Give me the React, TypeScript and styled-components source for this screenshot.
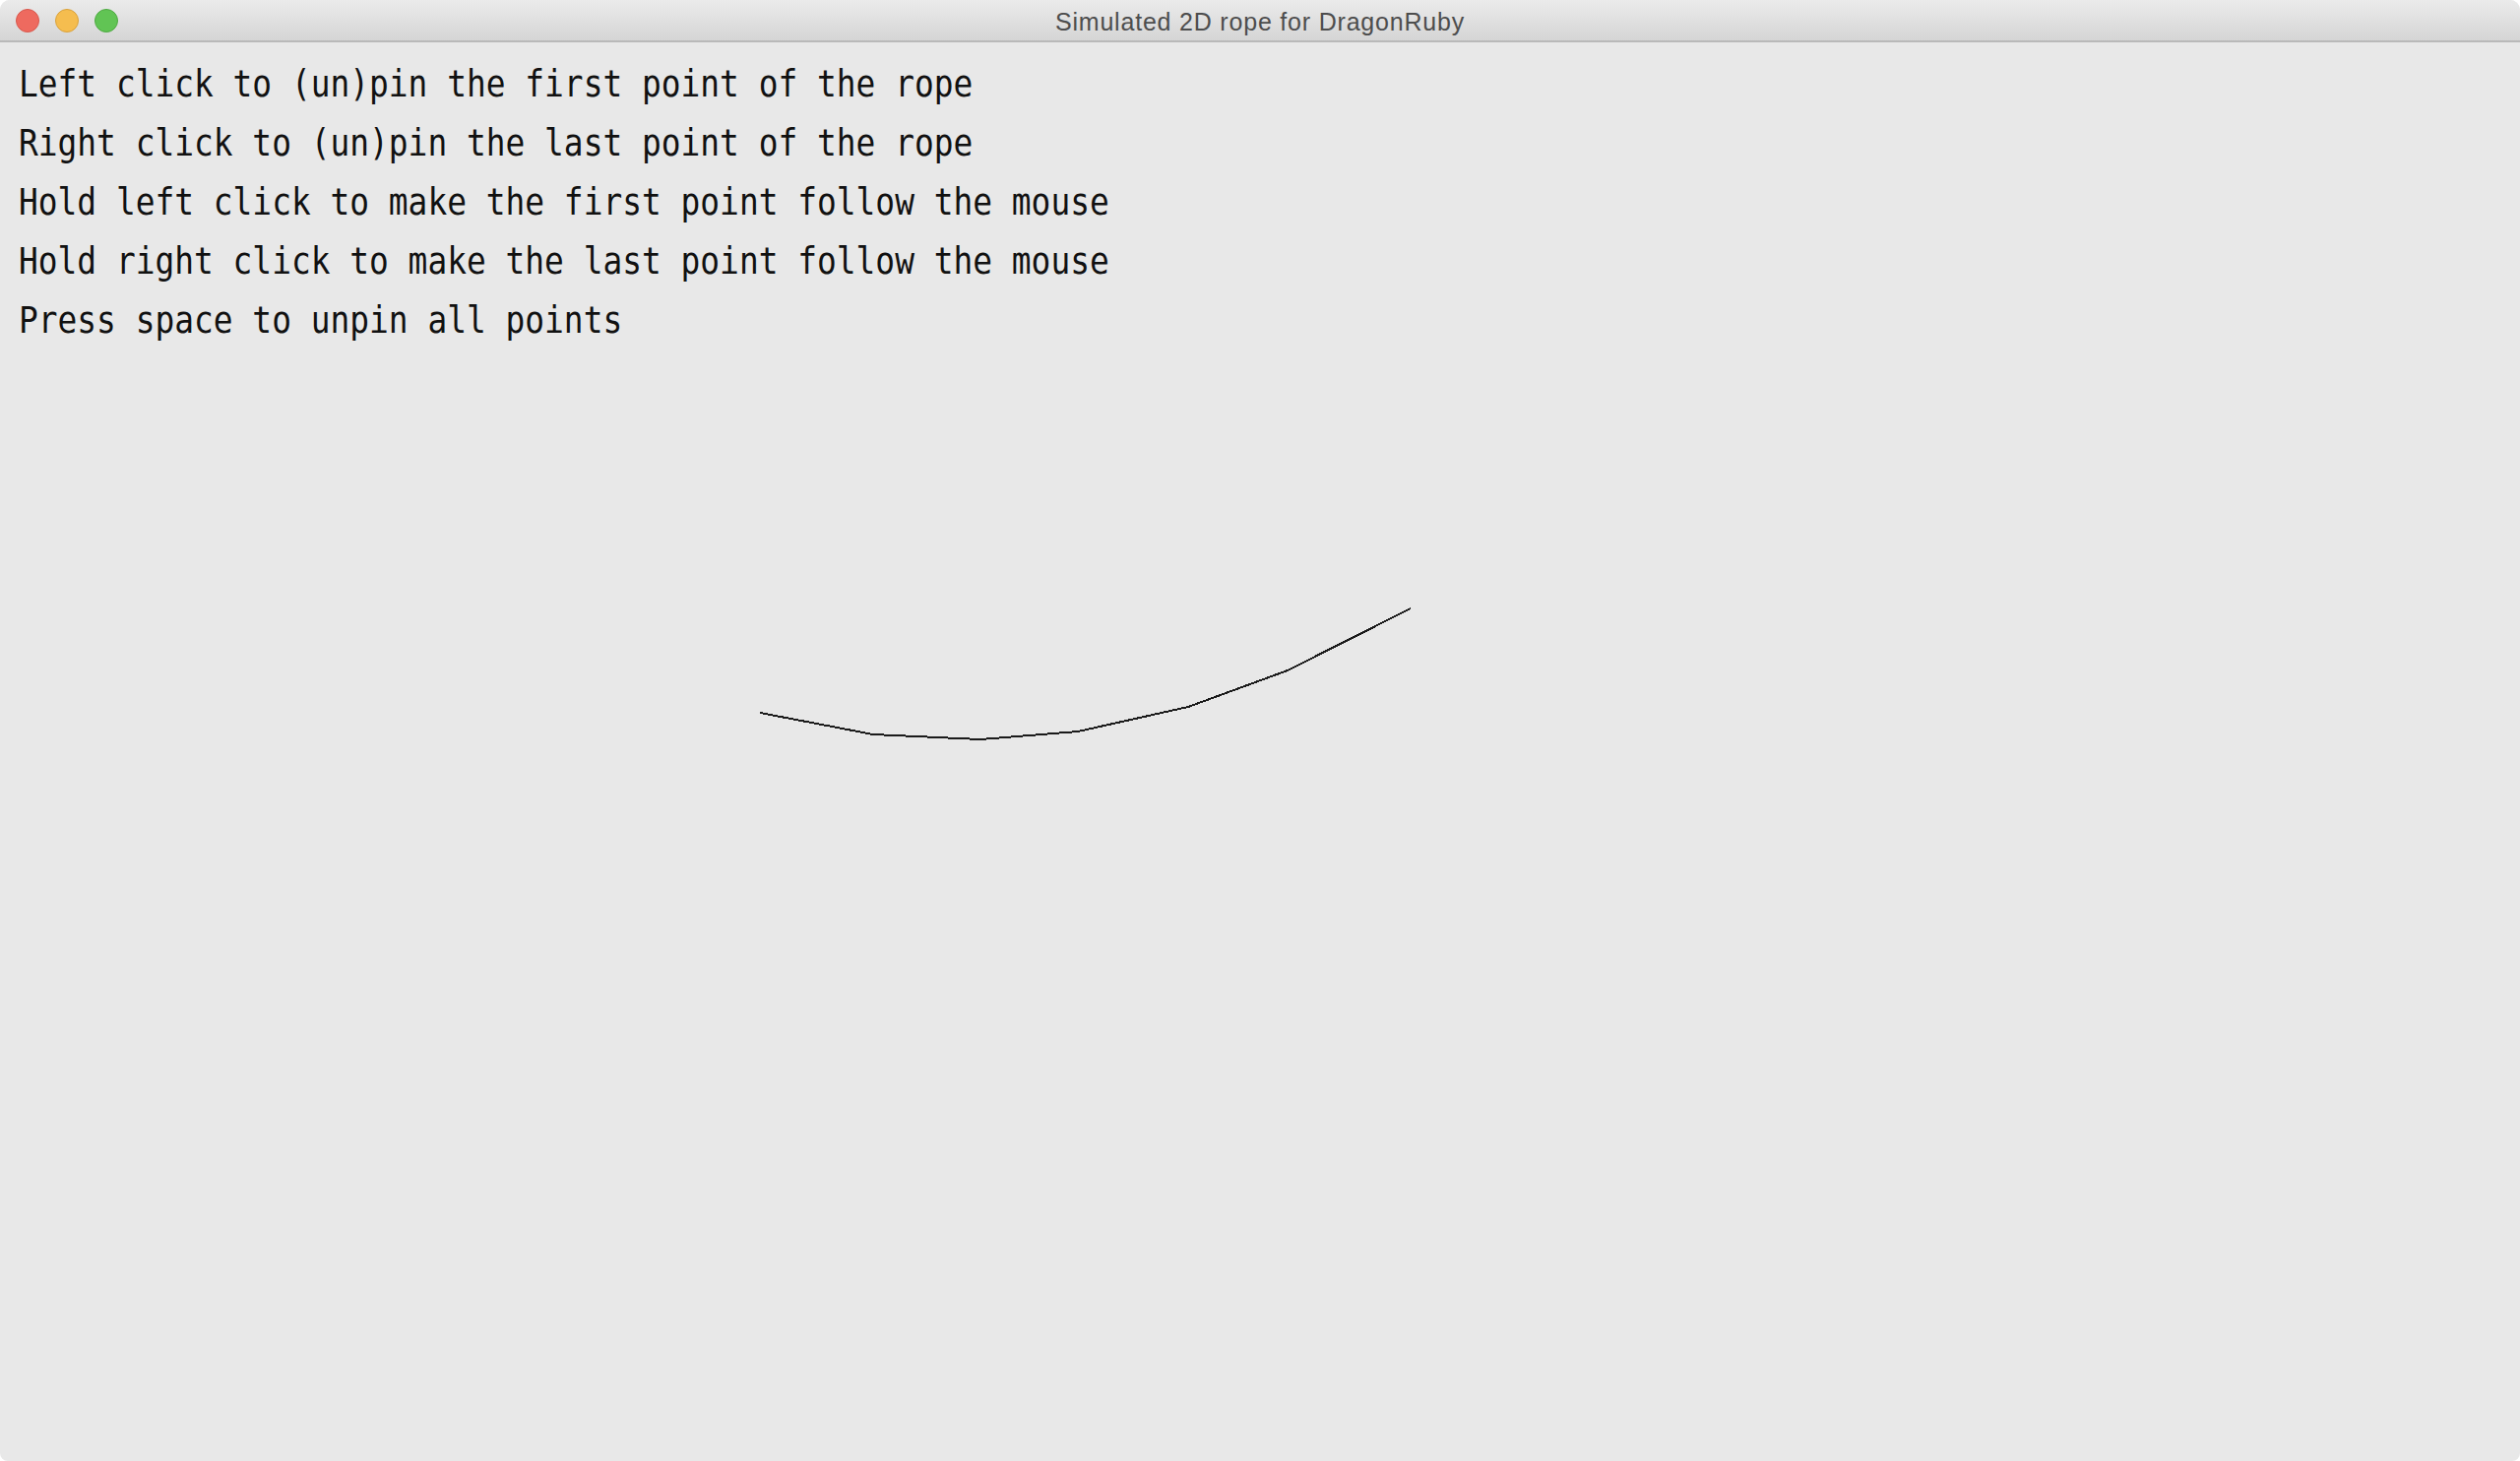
import React from "react";
import styled, { createGlobalStyle } from "styled-components";

const GlobalStyle = createGlobalStyle`
  html, body {
    margin: 0;
    padding: 0;
    background: #ffffff;
  }
  #root {
    width: 2560px;
    height: 1484px;
  }
`;

const Window = styled.div`
  width: 2560px;
  height: 1484px;
  display: flex;
  flex-direction: column;
  border-radius: 10px 10px 8px 8px;
  overflow: hidden;
  background: #e8e8e8;
`;

const TitleBar = styled.div`
  height: 41px;
  flex-shrink: 0;
  display: grid;
  grid-template-columns: 1fr auto 1fr;
  align-items: center;
  padding: 0 16px;
  background: linear-gradient(#ebebeb, #d5d5d5);
  border-bottom: 2px solid #b9b9b9;
  box-sizing: content-box;
`;

const Lights = styled.div`
  display: flex;
  gap: 16px;
  align-items: center;
`;

const Light = styled.span<{ $fill: string; $edge: string }>`
  width: 22px;
  height: 22px;
  border-radius: 50%;
  background: ${({ $fill }) => $fill};
  border: 1px solid ${({ $edge }) => $edge};
`;

const Title = styled.div`
  font-family: "Liberation Sans", Arial, sans-serif;
  font-size: 25px;
  letter-spacing: 0.8px;
  color: #4d4d4d;
  padding-top: 4px;
`;

const Canvas = styled.div`
  position: relative;
  flex: 1;
  padding: 13px 0 0 19px;
`;

const Labels = styled.div`
  display: flex;
  flex-direction: column;
`;

const Label = styled.div`
  font-family: "DejaVu Sans Mono", "Liberation Mono", monospace;
  font-size: 37px;
  line-height: 60px;
  color: #111111;
  white-space: pre;
  transform: scaleX(0.888);
  transform-origin: left center;
`;

const RopeLayer = styled.svg`
  position: absolute;
  inset: 0;
  width: 100%;
  height: 100%;
  pointer-events: none;
`;

const lines = [
  "Left click to (un)pin the first point of the rope",
  "Right click to (un)pin the last point of the rope",
  "Hold left click to make the first point follow the mouse",
  "Hold right click to make the last point follow the mouse",
  "Press space to unpin all points",
];

// rope nodes, canvas coordinates
const rope: [number, number][] = [
  [772, 681],
  [887, 703],
  [996, 708],
  [1095, 700],
  [1207, 675],
  [1308, 638],
  [1433, 575],
];

export default function App() {
  return (
    <>
      <GlobalStyle />
      <Window>
        <TitleBar>
          <Lights>
            <Light $fill="#ee6a5f" $edge="#d8574c" />
            <Light $fill="#f5bd4f" $edge="#d9a13a" />
            <Light $fill="#61c454" $edge="#4ea942" />
          </Lights>
          <Title>Simulated 2D rope for DragonRuby</Title>
          <span />
        </TitleBar>
        <Canvas>
          <Labels>
            {lines.map((l) => (
              <Label key={l}>{l}</Label>
            ))}
          </Labels>
          <RopeLayer>
            <polyline
              points={rope.map((p) => p.join(",")).join(" ")}
              fill="none"
              stroke="#1a1a1a"
              strokeWidth={2}
              shapeRendering="crispEdges"
            />
          </RopeLayer>
        </Canvas>
      </Window>
    </>
  );
}
